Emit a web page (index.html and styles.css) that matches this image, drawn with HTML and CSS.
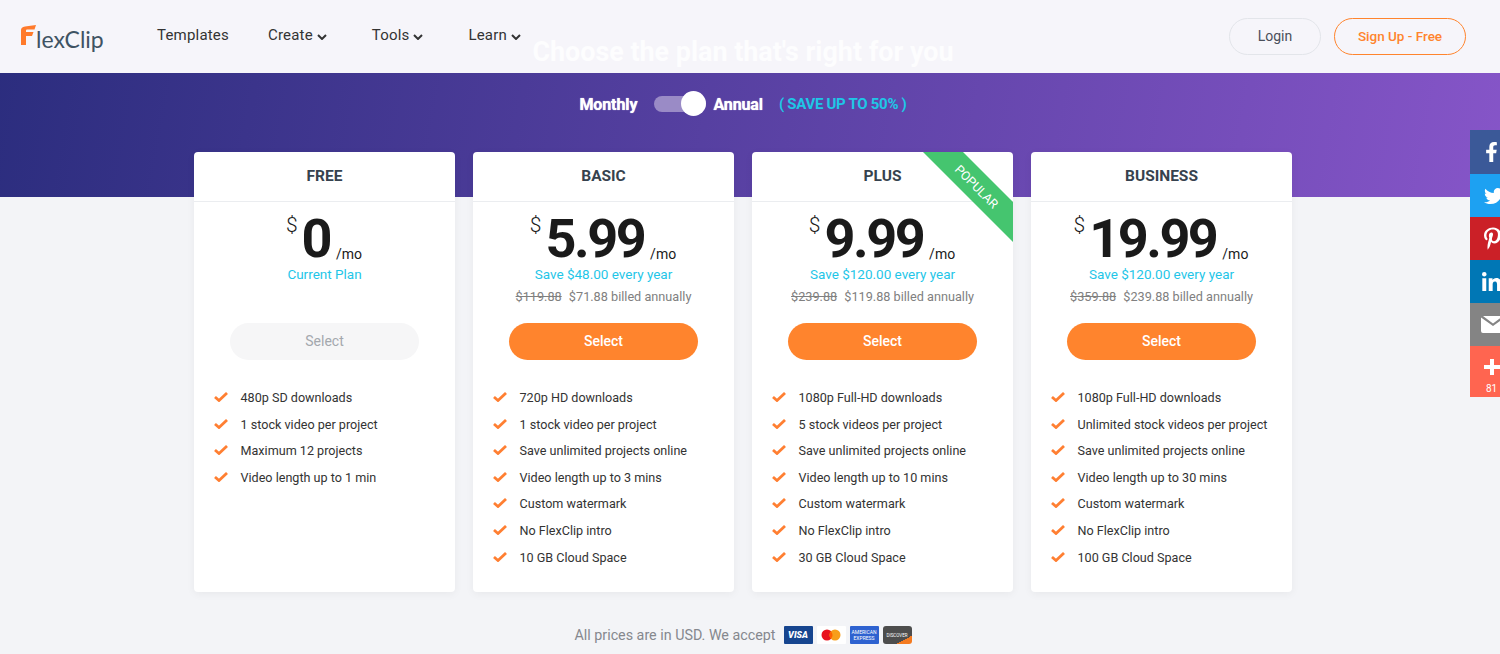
FILE: index.html
```html
<!DOCTYPE html>
<html lang="en">
<head>
    <meta charset="UTF-8">
    <meta name="viewport" content="width=device-width, initial-scale=1.0">
    <title>FlexClip Pricing</title>
    <link rel="stylesheet" href="styles.css">
</head>
<body>

    <header class="navbar">
        <a class="logo">
            <svg class="logo-mark" width="15" height="21" viewBox="0 0 15 21"><path d="M4 1.500L15 0 13.500 4.500H6Q5 4.500 5 5.500V7H12.500L11 11H5V20H0V5Q0 2 4 1.500Z" fill="#ff7a2b"/></svg>
            <span class="logo-text">lexClip</span>
        </a>
        <nav class="nav-links">
            <a class="nav-link nav-templates">Templates</a>
            <a class="nav-link nav-create">Create <svg class="chevron" width="10" height="6" viewBox="0 0 10 6"><path d="M1 1l4 4 4-4" fill="none" stroke="#333" stroke-width="2"/></svg></a>
            <a class="nav-link nav-tools">Tools <svg class="chevron" width="10" height="6" viewBox="0 0 10 6"><path d="M1 1l4 4 4-4" fill="none" stroke="#333" stroke-width="2"/></svg></a>
            <a class="nav-link">Learn <svg class="chevron" width="10" height="6" viewBox="0 0 10 6"><path d="M1 1l4 4 4-4" fill="none" stroke="#333" stroke-width="2"/></svg></a>
        </nav>
        <div class="nav-actions">
            <button class="btn-login">Login</button>
            <button class="btn-signup">Sign Up - Free</button>
        </div>
    </header>

    <main class="page">
        <section class="hero">
            <h1 class="hero-title">Choose the plan that's right for you</h1>
            <div class="billing">
                <span class="billing-label">Monthly</span>
                <span class="toggle"><span class="toggle-knob"></span></span>
                <span class="billing-label billing-annual">Annual</span>
                <span class="billing-save">( SAVE UP TO 50% )</span>
            </div>
        </section>

        <section class="plans">
            <article class="plan">
                <h2 class="plan-name">FREE</h2>
                <div class="price"><span class="currency">$</span><span class="amount">0</span><span class="per">/mo</span></div>
                <p class="save">Current Plan</p>
                <p class="billed"></p>
                <button class="select select-off">Select</button>
                <ul class="features">
                    <li>480p SD downloads</li>
                    <li>1 stock video per project</li>
                    <li>Maximum 12 projects</li>
                    <li>Video length up to 1 min</li>
                </ul>
            </article>

            <article class="plan">
                <h2 class="plan-name">BASIC</h2>
                <div class="price"><span class="currency">$</span><span class="amount">5.99</span><span class="per">/mo</span></div>
                <p class="save">Save $48.00 every year</p>
                <p class="billed"><s>$119.88</s> $71.88 billed annually</p>
                <button class="select">Select</button>
                <ul class="features">
                    <li>720p HD downloads</li>
                    <li>1 stock video per project</li>
                    <li>Save unlimited projects online</li>
                    <li>Video length up to 3 mins</li>
                    <li>Custom watermark</li>
                    <li>No FlexClip intro</li>
                    <li>10 GB Cloud Space</li>
                </ul>
            </article>

            <article class="plan">
                <div class="ribbon"><span class="ribbon-text">POPULAR</span></div>
                <h2 class="plan-name">PLUS</h2>
                <div class="price"><span class="currency">$</span><span class="amount">9.99</span><span class="per">/mo</span></div>
                <p class="save">Save $120.00 every year</p>
                <p class="billed"><s>$239.88</s> $119.88 billed annually</p>
                <button class="select">Select</button>
                <ul class="features">
                    <li>1080p Full-HD downloads</li>
                    <li>5 stock videos per project</li>
                    <li>Save unlimited projects online</li>
                    <li>Video length up to 10 mins</li>
                    <li>Custom watermark</li>
                    <li>No FlexClip intro</li>
                    <li>30 GB Cloud Space</li>
                </ul>
            </article>

            <article class="plan">
                <h2 class="plan-name">BUSINESS</h2>
                <div class="price"><span class="currency">$</span><span class="amount">19.99</span><span class="per">/mo</span></div>
                <p class="save">Save $120.00 every year</p>
                <p class="billed"><s>$359.88</s> $239.88 billed annually</p>
                <button class="select">Select</button>
                <ul class="features">
                    <li>1080p Full-HD downloads</li>
                    <li>Unlimited stock videos per project</li>
                    <li>Save unlimited projects online</li>
                    <li>Video length up to 30 mins</li>
                    <li>Custom watermark</li>
                    <li>No FlexClip intro</li>
                    <li>100 GB Cloud Space</li>
                </ul>
            </article>
        </section>

        <footer class="accept">
            <span>All prices are in USD. We accept</span>
            <span class="pay pay-visa">VISA</span>
            <span class="pay pay-mc"><svg width="22" height="13" viewBox="0 0 22 13"><circle cx="7" cy="6" r="5.500" fill="#e8101c"/><circle cx="15" cy="6" r="5.500" fill="#f79e1b"/><path d="M11 2.400a5.500 5.500 0 0 1 0 7.200a5.500 5.500 0 0 1 0-7.200z" fill="#ff5f00"/></svg></span>
            <span class="pay pay-amex">AMERICAN EXPRESS</span>
            <span class="pay pay-discover">DISCOVER</span>
        </footer>
    </main>

    <aside class="share">
        <a class="share-item share-fb"><svg width="13" height="20" viewBox="0 0 320 512"><path fill="#fff" d="M279.14 288l14.22-92.66h-88.91v-60.13c0-25.35 12.42-50.06 52.24-50.06h40.42V6.26S260.43 0 225.36 0c-73.22 0-121.08 44.38-121.08 124.72v70.62H22.89V288h81.39v224h100.17V288z"/></svg></a>
        <a class="share-item share-tw"><svg width="20" height="20" viewBox="0 0 512 512"><path fill="#fff" d="M459.37 151.716c.325 4.548.325 9.097.325 13.645 0 138.72-105.583 298.558-298.558 298.558-59.452 0-114.68-17.219-161.137-47.106 8.447.974 16.568 1.299 25.34 1.299 49.055 0 94.213-16.568 130.274-44.832-46.132-.975-84.792-31.188-98.112-72.772 6.498.974 12.995 1.624 19.818 1.624 9.421 0 18.843-1.3 27.614-3.573-48.081-9.747-84.143-51.98-84.143-102.985v-1.299c13.969 7.797 30.214 12.67 47.431 13.319-28.264-18.843-46.781-51.005-46.781-87.391 0-19.492 5.197-37.36 14.294-52.954 51.655 63.675 129.3 105.258 216.365 109.807-1.624-7.797-2.599-15.918-2.599-24.04 0-57.828 46.782-104.934 104.934-104.934 30.213 0 57.502 12.67 76.67 33.137 23.715-4.548 46.456-13.32 66.599-25.34-7.798 24.366-24.366 44.833-46.132 57.827 21.117-2.273 41.584-8.122 60.426-16.243-14.292 20.791-32.161 39.308-52.628 54.253z"/></svg></a>
        <a class="share-item share-pin"><svg width="17" height="23" viewBox="0 0 384 512"><path fill="#fff" d="M204 6.500C101.400 6.500 0 74.900 0 185.600 0 256 39.600 296 63.600 296c9.900 0 15.600-27.600 15.600-35.400 0-9.300-23.700-29.100-23.700-67.800 0-80.400 61.200-137.400 140.400-137.400 68.100 0 118.500 38.700 118.500 109.800 0 53.100-21.300 152.700-90.300 152.700-24.900 0-46.200-18-46.200-43.800 0-37.800 26.400-74.400 26.400-113.400 0-66.200-93.900-54.200-93.900 25.800 0 16.800 2.100 35.400 9.600 50.700-13.800 59.400-42 147.900-42 209.100 0 18.900 2.700 37.500 4.500 56.400 3.400 3.800 1.700 3.400 6.900 1.500 50.400-69 48.600-82.500 71.400-172.800 12.300 23.400 44.100 36 69.300 36 106.200 0 153.900-103.500 153.900-196.800C384 71.300 298.200 6.500 204 6.500z"/></svg></a>
        <a class="share-item share-in"><svg width="19" height="19" viewBox="0 0 448 448"><path fill="#fff" d="M100.280 448H7.400V148.900h92.880zM53.790 108.100C24.090 108.100 0 83.500 0 53.800a53.790 53.790 0 0 1 107.580 0c0 29.700-24.100 54.300-53.790 54.300zM447.900 448h-92.680V302.400c0-34.700-.7-79.200-48.290-79.200-48.290 0-55.690 37.700-55.690 76.700V448h-92.780V148.900h89.080v40.800h1.300c12.400-23.500 42.690-48.300 87.880-48.300 94 0 111.280 61.900 111.280 142.300V448z"/></svg></a>
        <a class="share-item share-mail"><svg width="24" height="17" viewBox="0 0 24 17"><path fill="#fff" d="M2 0H22L12 7.500ZM0 1.500L12 10 24 1.500V15a2 2 0 0 1-2 2H2a2 2 0 0 1-2-2Z"/></svg></a>
        <a class="share-item share-more"><svg width="16" height="16" viewBox="0 0 16 16"><path fill="#fff" d="M6 0h4v6h6v4h-6v6H6v-6H0V6h6z"/></svg><span class="share-count">81</span></a>
    </aside>

</body>
</html>
```

FILE: styles.css
```css
* {
    margin: 0;
    padding: 0;
    box-sizing: border-box;
    font-family: 'Roboto', 'Liberation Sans', sans-serif;
}

body {
    position: relative;
    height: 654px;
    overflow: hidden;
    background: #f3f4f7;
    color: #333;
}

.navbar {
    position: absolute;
    top: 0;
    left: 0;
    width: 100%;
    height: 73px;
    display: flex;
    align-items: center;
    padding: 0 34px 0 21px;
    background: #f6f5fa;
    z-index: 1;
}

.logo {
    display: flex;
    align-items: flex-start;
    width: 136px;
    height: 28px;
    margin-top: 2px;
}

.logo-mark {
    margin-top: 1px;
}

.logo-text {
    font-family: 'Lato', sans-serif;
    font-size: 23px;
    font-weight: 400;
    line-height: 30px;
    color: #3f5363;
}

.nav-links {
    display: flex;
    flex: 1;
    margin-top: -4px;
}

.nav-link {
    font-size: 15px;
    letter-spacing: 0.2px;
    color: #333;
    margin-right: 40px;
    white-space: nowrap;
}

.nav-templates {
    margin-right: 39px;
}

.nav-tools {
    margin-right: 45px;
}

.nav-create {
    margin-right: 45px;
}

.chevron {
    vertical-align: 0;
}

.nav-actions {
    display: flex;
    gap: 13px;
}

.nav-actions button {
    height: 37px;
    padding-bottom: 2px;
    border-radius: 19px;
    font-size: 14px;
    font-weight: 500;
    background: transparent;
}

.btn-login {
    width: 92px;
    border: 1px solid #e3e5ea;
    color: #4a4f5a;
    font-weight: 400 !important;
}

.nav-actions .btn-signup {
    width: 132px;
    border: 1px solid #ff842d;
    color: #ff842d;
    font-size: 13.500px;
}

.hero {
    height: 197px;
    padding-top: 35px;
    padding-right: 14px;
    background: linear-gradient(100deg, #2b2d7e 0%, #8655c8 100%);
    text-align: center;
}

.hero-title {
    position: relative;
    z-index: 2;
    font-size: 26.900px;
    font-weight: 700;
    line-height: 34px;
    color: #fdfdfe;
}

.billing {
    display: flex;
    justify-content: center;
    align-items: center;
    height: 26px;
    margin-top: 22px;
    color: #fff;
    font-size: 16px;
    font-weight: 700;
}

.billing-label {
    letter-spacing: -0.1px;
    text-shadow: 0 0 1px #fff;
}

.toggle {
    position: relative;
    width: 52px;
    height: 16px;
    margin: 0 7px 0 17px;
    border-radius: 8px;
    background: #9a8bc6;
}

.toggle-knob {
    position: absolute;
    top: -5px;
    right: 0;
    width: 25px;
    height: 25px;
    border-radius: 50%;
    background: #fff;
}

.billing-save {
    margin-left: 16px;
    font-size: 15px;
    letter-spacing: -0.3px;
    color: #1ec7e6;
}

.plans {
    display: flex;
    justify-content: center;
    gap: 18px;
    margin-top: -45px;
    padding-right: 14px;
}

.plan {
    position: relative;
    width: 261px;
    height: 440px;
    background: #fff;
    border-radius: 4px;
    box-shadow: 0 2px 8px rgba(0, 0, 0, 0.05);
    text-align: center;
    overflow: hidden;
}

.plan-name {
    height: 50px;
    border-bottom: 1px solid #ebedf0;
    font-size: 15.500px;
    font-weight: 700;
    line-height: 49px;
    color: #36424e;
}

.price {
    display: flex;
    justify-content: center;
    align-items: flex-start;
    height: 61px;
    padding-right: 1px;
    color: #1a1a1a;
}

.currency {
    font-size: 21px;
    font-weight: 300;
    line-height: 24px;
    margin-top: 11px;
    margin-right: 4px;
}

.amount {
    font-size: 54px;
    font-weight: 700;
    line-height: 48px;
    margin-top: 13px;
    letter-spacing: -2.500px;
}

.per {
    font-size: 14px;
    margin-top: 44px;
    margin-left: 6px;
}

.save {
    height: 22px;
    font-size: 13.500px;
    line-height: 22px;
    color: #1fc6e8;
}

.billed {
    height: 22px;
    padding-top: 1px;
    font-size: 12.700px;
    line-height: 21px;
    color: #808080;
}

.billed s {
    margin-right: 4px;
}

.select {
    display: block;
    width: 189px;
    height: 37px;
    margin: 16px auto 0;
    padding-bottom: 2px;
    border: none;
    border-radius: 19px;
    background: #ff842d;
    color: #fff;
    font-size: 14px;
    font-weight: 500;
}

.select-off {
    background: #f6f6f7;
    color: #a4a8ae;
    font-weight: 400;
}

.features {
    list-style: none;
    margin-top: 25px;
    padding-left: 20px;
    text-align: left;
}

.features li {
    height: 26.600px;
    padding-left: 26.500px;
    font-size: 12.600px;
    line-height: 26px;
    color: #333;
    background: url("data:image/svg+xml,%3Csvg xmlns='http://www.w3.org/2000/svg' width='14' height='10' viewBox='0 0 14 10'%3E%3Cpath d='M1 5l4 3.500L13 1' fill='none' stroke='%23ff7f32' stroke-width='2.800'/%3E%3C/svg%3E") no-repeat 0 7px;
}

.ribbon {
    position: absolute;
    top: 0;
    right: 0;
    width: 90px;
    height: 90px;
    display: flex;
    justify-content: center;
    align-items: center;
    background: #45c56f;
    clip-path: polygon(0 0, 40px 0, 100% 50px, 100% 100%);
}

.ribbon-text {
    font-size: 12.500px;
    color: #fff;
    transform: translate(9px, -11px) rotate(45deg);
}

.accept {
    display: flex;
    justify-content: center;
    align-items: center;
    gap: 4px;
    height: 18px;
    margin-top: 34px;
    padding-right: 14px;
    font-size: 14.300px;
    color: #85888e;
}

.accept > span:first-child {
    margin-right: 4px;
}

.pay {
    display: flex;
    justify-content: center;
    align-items: center;
    width: 29px;
    height: 18px;
    border-radius: 1px;
    overflow: hidden;
    text-align: center;
    color: #fff;
}

.pay-visa {
    background: #16458f;
    font-size: 9px;
    font-weight: 900;
    font-style: italic;
}

.pay-mc {
    background: #fff;
}

.pay-amex {
    background: #2e62d0;
    font-size: 5px;
    line-height: 6px;
}

.pay-discover {
    background: linear-gradient(152deg, #4d4d4d 75%, #f47a20 75%);
    border-radius: 3px;
    font-size: 4.500px;
}

.share {
    position: absolute;
    top: 130px;
    right: 0;
    width: 30px;
    overflow: hidden;
    z-index: 3;
}

.share-item {
    display: flex;
    align-items: center;
    width: 50px;
    height: 43px;
    padding-left: 14px;
}

.share-fb {
    height: 44px;
    padding-left: 15px;
    background: #3b5998;
}

.share-tw {
    background: #1da1f2;
}

.share-pin {
    background: #cb2027;
}

.share-in {
    padding-left: 12px;
    background: #0077b5;
}

.share-mail {
    padding-left: 11px;
    background: #848484;
}

.share-more {
    position: relative;
    height: 51px;
    padding: 0 0 9px 14px;
    background: #ff6550;
}

.share-count {
    position: absolute;
    top: 37px;
    left: 16px;
    font-size: 10px;
    color: #fff;
}
```
